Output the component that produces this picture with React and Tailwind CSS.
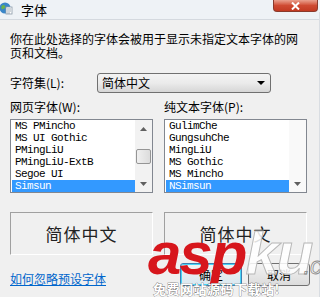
import React from "react";

const cjk = { fontFamily: '"Noto Sans CJK SC", "Noto Sans", sans-serif' };
const mono = { fontFamily: '"Liberation Mono", "DejaVu Sans Mono", monospace' };
const arial = { fontFamily: '"Liberation Sans", Arial, sans-serif' };

function ListBox({ items, selected, faded }) {
  return (
    <div className="flex h-[74px] w-[143px] border border-[#828790] bg-white">
      <div className="flex flex-1 flex-col pl-[1px]" style={mono}>
        {items.map((it) => (
          <div
            key={it}
            className={
              "h-[12px] pl-[3px] text-[11px] leading-[12px] tracking-[-0.6px] " +
              (it === selected ? "bg-[#3399ff] text-white" : "text-black")
            }
          >
            {it}
          </div>
        ))}
      </div>
      <div
        className={
          "flex w-[17px] flex-col items-center " +
          (faded ? "bg-[#f9f9f9]" : "bg-[#f2f2f2]")
        }
      >
        <div className="flex h-[17px] w-full items-center justify-center">
          {!faded && (
            <svg width="7" height="4" viewBox="0 0 7 4">
              <path d="M0 4 L3.5 0 L7 4 Z" fill="#606060" />
            </svg>
          )}
        </div>
        <div className="flex-1 w-full">
          {!faded && (
            <div className="mx-auto mt-[12px] h-[15px] w-[15px] rounded-[2px] border border-[#959595] bg-gradient-to-r from-[#f0f0f0] to-[#dcdcdc]" />
          )}
        </div>
        <div className="flex h-[17px] w-full items-center justify-center">
          <svg width="7" height="4" viewBox="0 0 7 4">
            <path d="M0 0 L7 0 L3.5 4 Z" fill="#606060" />
          </svg>
        </div>
      </div>
    </div>
  );
}

function Preview() {
  return (
    <div
      className="flex h-[43px] w-[143px] items-center justify-center border-t border-l border-[#a0a0a0] border-r-white border-b-white border-r border-b text-[17px] tracking-[1px] text-[#222]"
      style={cjk}
    >
      简体中文
    </div>
  );
}

export default function App() {
  return (
    <div
      className="relative h-[297px] w-[320px] overflow-hidden bg-[#f0f0f0] text-black"
      style={cjk}
    >
      {/* title bar */}
      <div className="flex h-[20px] items-start border-b border-[#d4d9df] bg-[#eef2f6]">
        <div className="mt-[2px]">
          <svg width="13" height="13" viewBox="0 0 13 13">
            <circle cx="5" cy="6" r="5.5" fill="#3a86c8" />
            <path d="M1.5 4 Q4 2 5 4 Q6 6 3 7 Q1 8 1.5 4Z" fill="#6bb34a" />
            <rect x="6" y="5" width="6" height="7" fill="#fff" stroke="#8a9aa8" strokeWidth="0.8" />
            <path d="M7 7h4M7 9h4M7 11h3" stroke="#7a8a98" strokeWidth="0.7" />
          </svg>
        </div>
        <div className="ml-[8px] mt-[2px] text-[13px] leading-[15px] text-black">字体</div>
        <div className="ml-auto mr-[2px] flex h-[12px] w-[45px] items-center justify-center rounded-b-[4px] border border-t-0 border-[#8a3a2c] bg-gradient-to-b from-[#e9a08e] via-[#cf4a32] to-[#c23a22]">
          <svg width="9" height="8" viewBox="0 0 9 8">
            <path d="M1 0.5 L8 7.5 M8 0.5 L1 7.5" stroke="#fff" strokeWidth="2" />
          </svg>
        </div>
      </div>

      <div className="absolute right-0 top-[12px] bottom-0 w-[1px] bg-[#d9dde2]" />

      <div className="flex flex-col px-[10px] pt-[12px]">
        <div className="text-[12px] leading-[14px]">
          你在此处选择的字体会被用于显示未指定文本字体的网
          <br />
          页和文档。
        </div>

        {/* charset row */}
        <div className="mt-[13px] flex h-[20px] items-center">
          <div className="w-[87px] text-[12px] leading-[14px]">字符集(L):</div>
          <div className="flex h-[20px] w-[174px] items-center rounded-[3px] border border-[#707070] bg-gradient-to-b from-[#f3f3f3] via-[#ebebeb] to-[#d6d6d6] pl-[4px] pr-[5px]">
            <span className="text-[12px] leading-[14px]">简体中文</span>
            <svg className="ml-auto" width="8" height="4" viewBox="0 0 8 4">
              <path d="M0 0 L8 0 L4 4 Z" fill="#000" />
            </svg>
          </div>
        </div>

        {/* lists */}
        <div className="mt-[7px] flex gap-[11px]">
          <div className="flex flex-col">
            <div className="h-[14px] text-[12px] leading-[14px]">网页字体(W):</div>
            <div className="mt-[5px]">
              <ListBox
                items={["MS PMincho", "MS UI Gothic", "PMingLiU", "PMingLiU-ExtB", "Segoe UI", "Simsun"]}
                selected="Simsun"
              />
            </div>
          </div>
          <div className="flex flex-col">
            <div className="h-[14px] text-[12px] leading-[14px]">纯文本字体(P):</div>
            <div className="mt-[5px]">
              <ListBox
                items={["GulimChe", "GungsuhChe", "MingLiU", "MS Gothic", "MS Mincho", "NSimsun"]}
                selected="NSimsun"
                faded
              />
            </div>
          </div>
        </div>

        {/* previews */}
        <div className="mt-[19px] flex gap-[11px]">
          <Preview />
          <Preview />
        </div>

        {/* bottom row */}
        <div className="mt-[8px] flex items-start">
          <a className="mt-[9px] text-[12px] leading-[14px] text-[#0066cc] underline">如何忽略预设字体</a>
          <div className="ml-auto flex gap-[6px]">
            <div className="flex h-[23px] w-[62px] items-center justify-center rounded-[3px] border border-[#3c7fb1] bg-gradient-to-b from-[#f2f2f2] to-[#d9e8f0] text-[12px] shadow-[inset_0_0_0_1px_#48d3f6]">
              确定
            </div>
            <div className="flex h-[23px] w-[62px] items-center justify-center rounded-[3px] border border-[#707070] bg-gradient-to-b from-[#f2f2f2] to-[#dcdcdc] text-[12px]">
              取消
            </div>
          </div>
        </div>
      </div>

      {/* watermark overlay */}
      <div className="pointer-events-none absolute left-[148px] top-[224px] flex items-baseline" style={arial}>
        <span className="text-[length:60px] font-bold italic leading-[60px] tracking-[-2px] text-[#d7161c]">
          asp
        </span>
        <span
          className="text-[length:60px] font-bold italic leading-[60px] tracking-[-2px] text-white/85"
          style={{ WebkitTextStroke: "1px #b8b8b8" }}
        >
          ku
        </span>
        <span
          className="ml-[-8px] text-[length:24px] italic leading-[24px] text-transparent"
          style={{ WebkitTextStroke: "0.8px #8a8a8a" }}
        >
          .com
        </span>
      </div>
      <div
        className="pointer-events-none absolute left-[153px] top-[281px] text-[13px] font-bold leading-[15px] tracking-[0.5px] text-white"
        style={{ ...cjk, WebkitTextStroke: "0.6px #555", paintOrder: "stroke fill" }}
      >
        免费网站源码下载站!
      </div>
    </div>
  );
}
